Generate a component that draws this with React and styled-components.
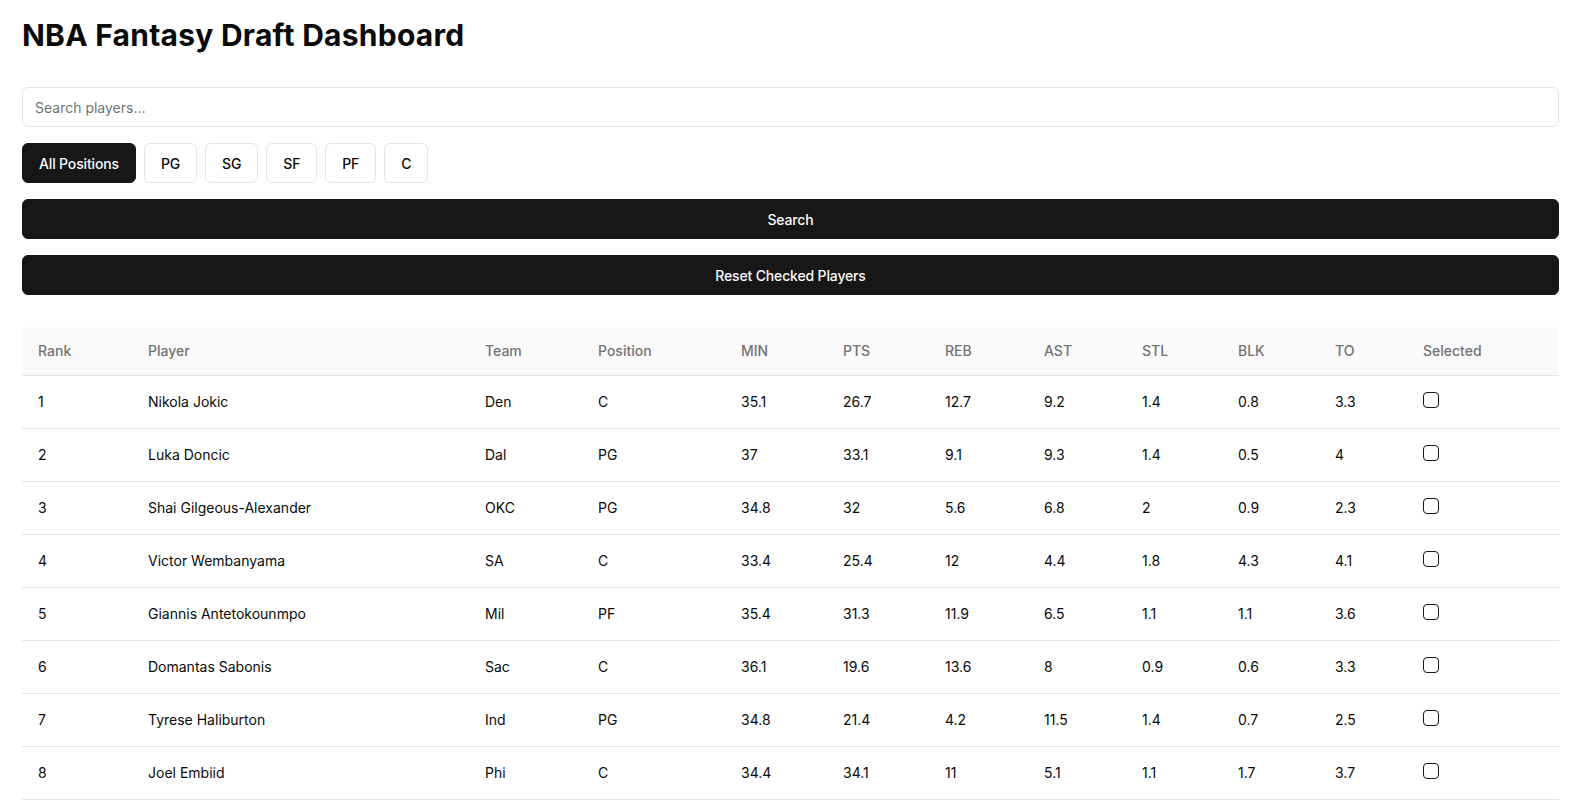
import React, { useState } from "react";
import styled, { createGlobalStyle } from "styled-components";

const GlobalStyle = createGlobalStyle`
  html, body {
    margin: 0;
    padding: 0;
    background: #ffffff;
    overflow: hidden;
  }
  body {
    font-family: Inter, "Liberation Sans", sans-serif;
    color: #0a0a0a;
  }
  * {
    box-sizing: border-box;
  }
`;

const Page = styled.div`
  padding: 17px 26px 32px 22px;
`;

const Title = styled.h1`
  margin: 0 0 34px 0;
  font-size: 30px;
  line-height: 36px;
  font-weight: 700;
  letter-spacing: 0.25px;
  color: #0a0a0a;
`;

const Controls = styled.div`
  display: flex;
  flex-direction: column;
  gap: 16px;
  margin-bottom: 32px;
`;

const SearchInput = styled.input`
  height: 40px;
  width: 100%;
  padding: 8px 12px;
  border: 1px solid #e5e5e5;
  border-radius: 6px;
  font-family: inherit;
  font-size: 14px;
  color: #0a0a0a;
  outline: none;

  &::placeholder {
    color: #737373;
  }
`;

const FilterRow = styled.div`
  display: flex;
  gap: 8px;
`;

const Button = styled.button`
  height: 40px;
  padding: 0 16px;
  border-radius: 6px;
  font-family: inherit;
  font-size: 14px;
  font-weight: 500;
  letter-spacing: -0.15px;
  cursor: pointer;
  border: 1px solid ${(p) => (p.$active ? "#171717" : "#e5e5e5")};
  background: ${(p) => (p.$active ? "#171717" : "#ffffff")};
  color: ${(p) => (p.$active ? "#fafafa" : "#0a0a0a")};
  width: ${(p) => (p.$block ? "100%" : "auto")};
`;

const Table = styled.table`
  width: 100%;
  border-collapse: collapse;
  table-layout: fixed;
  font-size: 14px;
`;

const HeadRow = styled.tr`
  background: #fafafa;
  border-bottom: 1px solid #e5e5e5;
`;

const Th = styled.th`
  height: 48px;
  padding: 0 16px;
  text-align: left;
  font-weight: 500;
  color: #737373;
`;

const Row = styled.tr`
  border-bottom: 1px solid #e5e5e5;
`;

const Td = styled.td`
  padding: 16px;
  line-height: 20px;
  vertical-align: middle;
  color: #0a0a0a;
`;

const Check = styled.input`
  appearance: none;
  display: block;
  margin: 0 0 4px 0;
  width: 16px;
  height: 16px;
  border: 1px solid #171717;
  border-radius: 4px;
  background: #fff;
  cursor: pointer;

  &:checked {
    background: #171717;
  }
`;

const columns = [
  ["Rank", 110],
  ["Player", 337],
  ["Team", 113],
  ["Position", 143],
  ["MIN", 102],
  ["PTS", 102],
  ["REB", 99],
  ["AST", 98],
  ["STL", 96],
  ["BLK", 97],
  ["TO", 88],
  ["Selected", 152],
];

const players = [
  [1, "Nikola Jokic", "Den", "C", 35.1, 26.7, 12.7, 9.2, 1.4, 0.8, 3.3],
  [2, "Luka Doncic", "Dal", "PG", 37, 33.1, 9.1, 9.3, 1.4, 0.5, 4],
  [3, "Shai Gilgeous-Alexander", "OKC", "PG", 34.8, 32, 5.6, 6.8, 2, 0.9, 2.3],
  [4, "Victor Wembanyama", "SA", "C", 33.4, 25.4, 12, 4.4, 1.8, 4.3, 4.1],
  [5, "Giannis Antetokounmpo", "Mil", "PF", 35.4, 31.3, 11.9, 6.5, 1.1, 1.1, 3.6],
  [6, "Domantas Sabonis", "Sac", "C", 36.1, 19.6, 13.6, 8, 0.9, 0.6, 3.3],
  [7, "Tyrese Haliburton", "Ind", "PG", 34.8, 21.4, 4.2, 11.5, 1.4, 0.7, 2.5],
  [8, "Joel Embiid", "Phi", "C", 34.4, 34.1, 11, 5.1, 1.1, 1.7, 3.7],
];

const positions = ["All Positions", "PG", "SG", "SF", "PF", "C"];

export default function App() {
  const [position, setPosition] = useState("All Positions");
  const [checked, setChecked] = useState({});

  const toggle = (rank) => setChecked({ ...checked, [rank]: !checked[rank] });

  return (
    <Page>
      <GlobalStyle />
      <Title>NBA Fantasy Draft Dashboard</Title>
      <Controls>
        <SearchInput placeholder="Search players..." />
        <FilterRow>
          {positions.map((p) => (
            <Button key={p} $active={position === p} onClick={() => setPosition(p)}>
              {p}
            </Button>
          ))}
        </FilterRow>
        <Button $active $block>Search</Button>
        <Button $active $block onClick={() => setChecked({})}>
          Reset Checked Players
        </Button>
      </Controls>

      <Table>
        <colgroup>
          {columns.map(([name, w]) => (
            <col key={name} style={{ width: w }} />
          ))}
        </colgroup>
        <thead>
          <HeadRow>
            {columns.map(([name]) => (
              <Th key={name}>{name}</Th>
            ))}
          </HeadRow>
        </thead>
        <tbody>
          {players.map((row) => (
            <Row key={row[0]}>
              {row.map((v, i) => (
                <Td key={i}>{v}</Td>
              ))}
              <Td>
                <Check
                  type="checkbox"
                  checked={!!checked[row[0]]}
                  onChange={() => toggle(row[0])}
                />
              </Td>
            </Row>
          ))}
        </tbody>
      </Table>
    </Page>
  );
}
